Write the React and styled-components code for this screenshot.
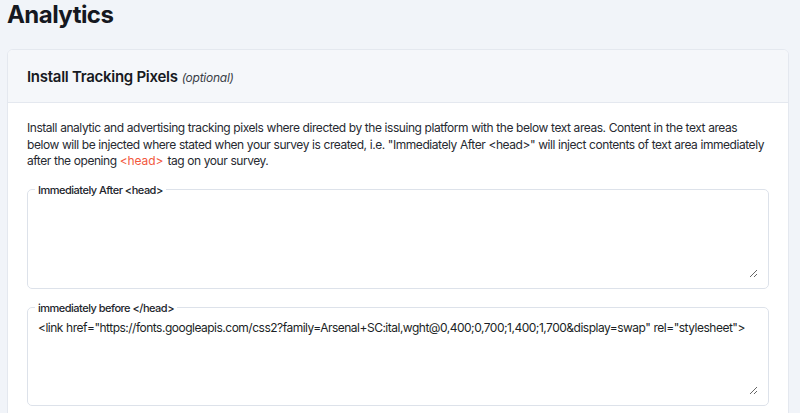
import React from "react";
import styled, { createGlobalStyle } from "styled-components";

const Global = createGlobalStyle`
  html, body { margin: 0; padding: 0; background: #f1f4f9; }
  body { font-family: Inter, "Noto Sans", sans-serif; color: #1c1f26; }
  * { box-sizing: border-box; }
`;

const Page = styled.div`
  padding: 0 11px 0 7px;
`;

const Title = styled.h1`
  margin: 0;
  padding-top: 1px;
  height: 41px;
  font-size: 24px;
  font-weight: 700;
  line-height: 28px;
  color: #151821;
  letter-spacing: -0.55px;
`;

const Card = styled.section`
  margin-top: 8px;
  background: #fff;
  border: 1px solid #e4e8ef;
  border-radius: 6px;
  overflow: hidden;
`;

const CardHeader = styled.header`
  background: #f5f7fa;
  border-bottom: 1px solid #e4e8ef;
  padding: 0 19px;
  height: 53px;
  display: flex;
  align-items: center;
  gap: 4px;
`;

const HeaderTitle = styled.h2`
  margin: 0;
  font-size: 15px;
  font-weight: 600;
  color: #171a22;
  letter-spacing: -0.28px;
`;

const Optional = styled.span`
  font-size: 12px;
  font-style: italic;
  color: #3a3e47;
  padding-top: 2px;
  letter-spacing: -0.25px;
`;

const CardBody = styled.div`
  padding: 17px 19px 0;
`;

const Intro = styled.p`
  margin: 0 0 13px;
  font-size: 12px;
  line-height: 16.5px;
  letter-spacing: -0.45px;
  word-spacing: 0.2px;
  color: #272a31;
`;

const Code = styled.span`
  color: #f2583d;
  letter-spacing: -0.1px;
  margin-right: 1px;
`;

const Field = styled.fieldset`
  margin: 0 0 12px;
  padding: 4px 10px 10px;
  border: 1px solid #dde2ea;
  border-radius: 5px;
  min-width: 0;
`;

const Legend = styled.legend`
  font-size: 11px;
  font-weight: 500;
  line-height: 14px;
  padding: 0 3px;
  margin-left: -3px;
  color: #22252c;
  letter-spacing: -0.5px;
`;

const Area = styled.textarea`
  display: block;
  width: 100%;
  height: ${(p) => p.$h}px;
  border: none;
  outline: none;
  padding: 1px 0 0;
  margin: 0;
  resize: vertical;
  background: transparent;
  font-family: Inter, "Noto Sans", sans-serif;
  font-size: 12px;
  line-height: 16px;
  letter-spacing: -0.5px;
  word-spacing: 0.3px;
  color: #1c1f26;
`;

export default function App() {
  return (
    <>
      <Global />
      <Page>
        <Title>Analytics</Title>
        <Card>
          <CardHeader>
            <HeaderTitle>Install Tracking Pixels</HeaderTitle>
            <Optional>(optional)</Optional>
          </CardHeader>
          <CardBody>
            <Intro>
              Install analytic and advertising tracking pixels where directed by the issuing platform with the below text areas. Content in the text areas below will be injected where stated when your survey is created, i.e. "Immediately After &lt;head&gt;" will inject contents of text area immediately after the opening <Code>&lt;head&gt;</Code> tag on your survey.
            </Intro>
            <Field>
              <Legend>Immediately After &lt;head&gt;</Legend>
              <Area $h={77} defaultValue="" />
            </Field>
            <Field>
              <Legend>immediately before &lt;/head&gt;</Legend>
              <Area
                $h={76}
                defaultValue={'<link href="https://fonts.googleapis.com/css2?family=Arsenal+SC:ital,wght@0,400;0,700;1,400;1,700&display=swap" rel="stylesheet">'}
              />
            </Field>
          </CardBody>
        </Card>
      </Page>
    </>
  );
}
